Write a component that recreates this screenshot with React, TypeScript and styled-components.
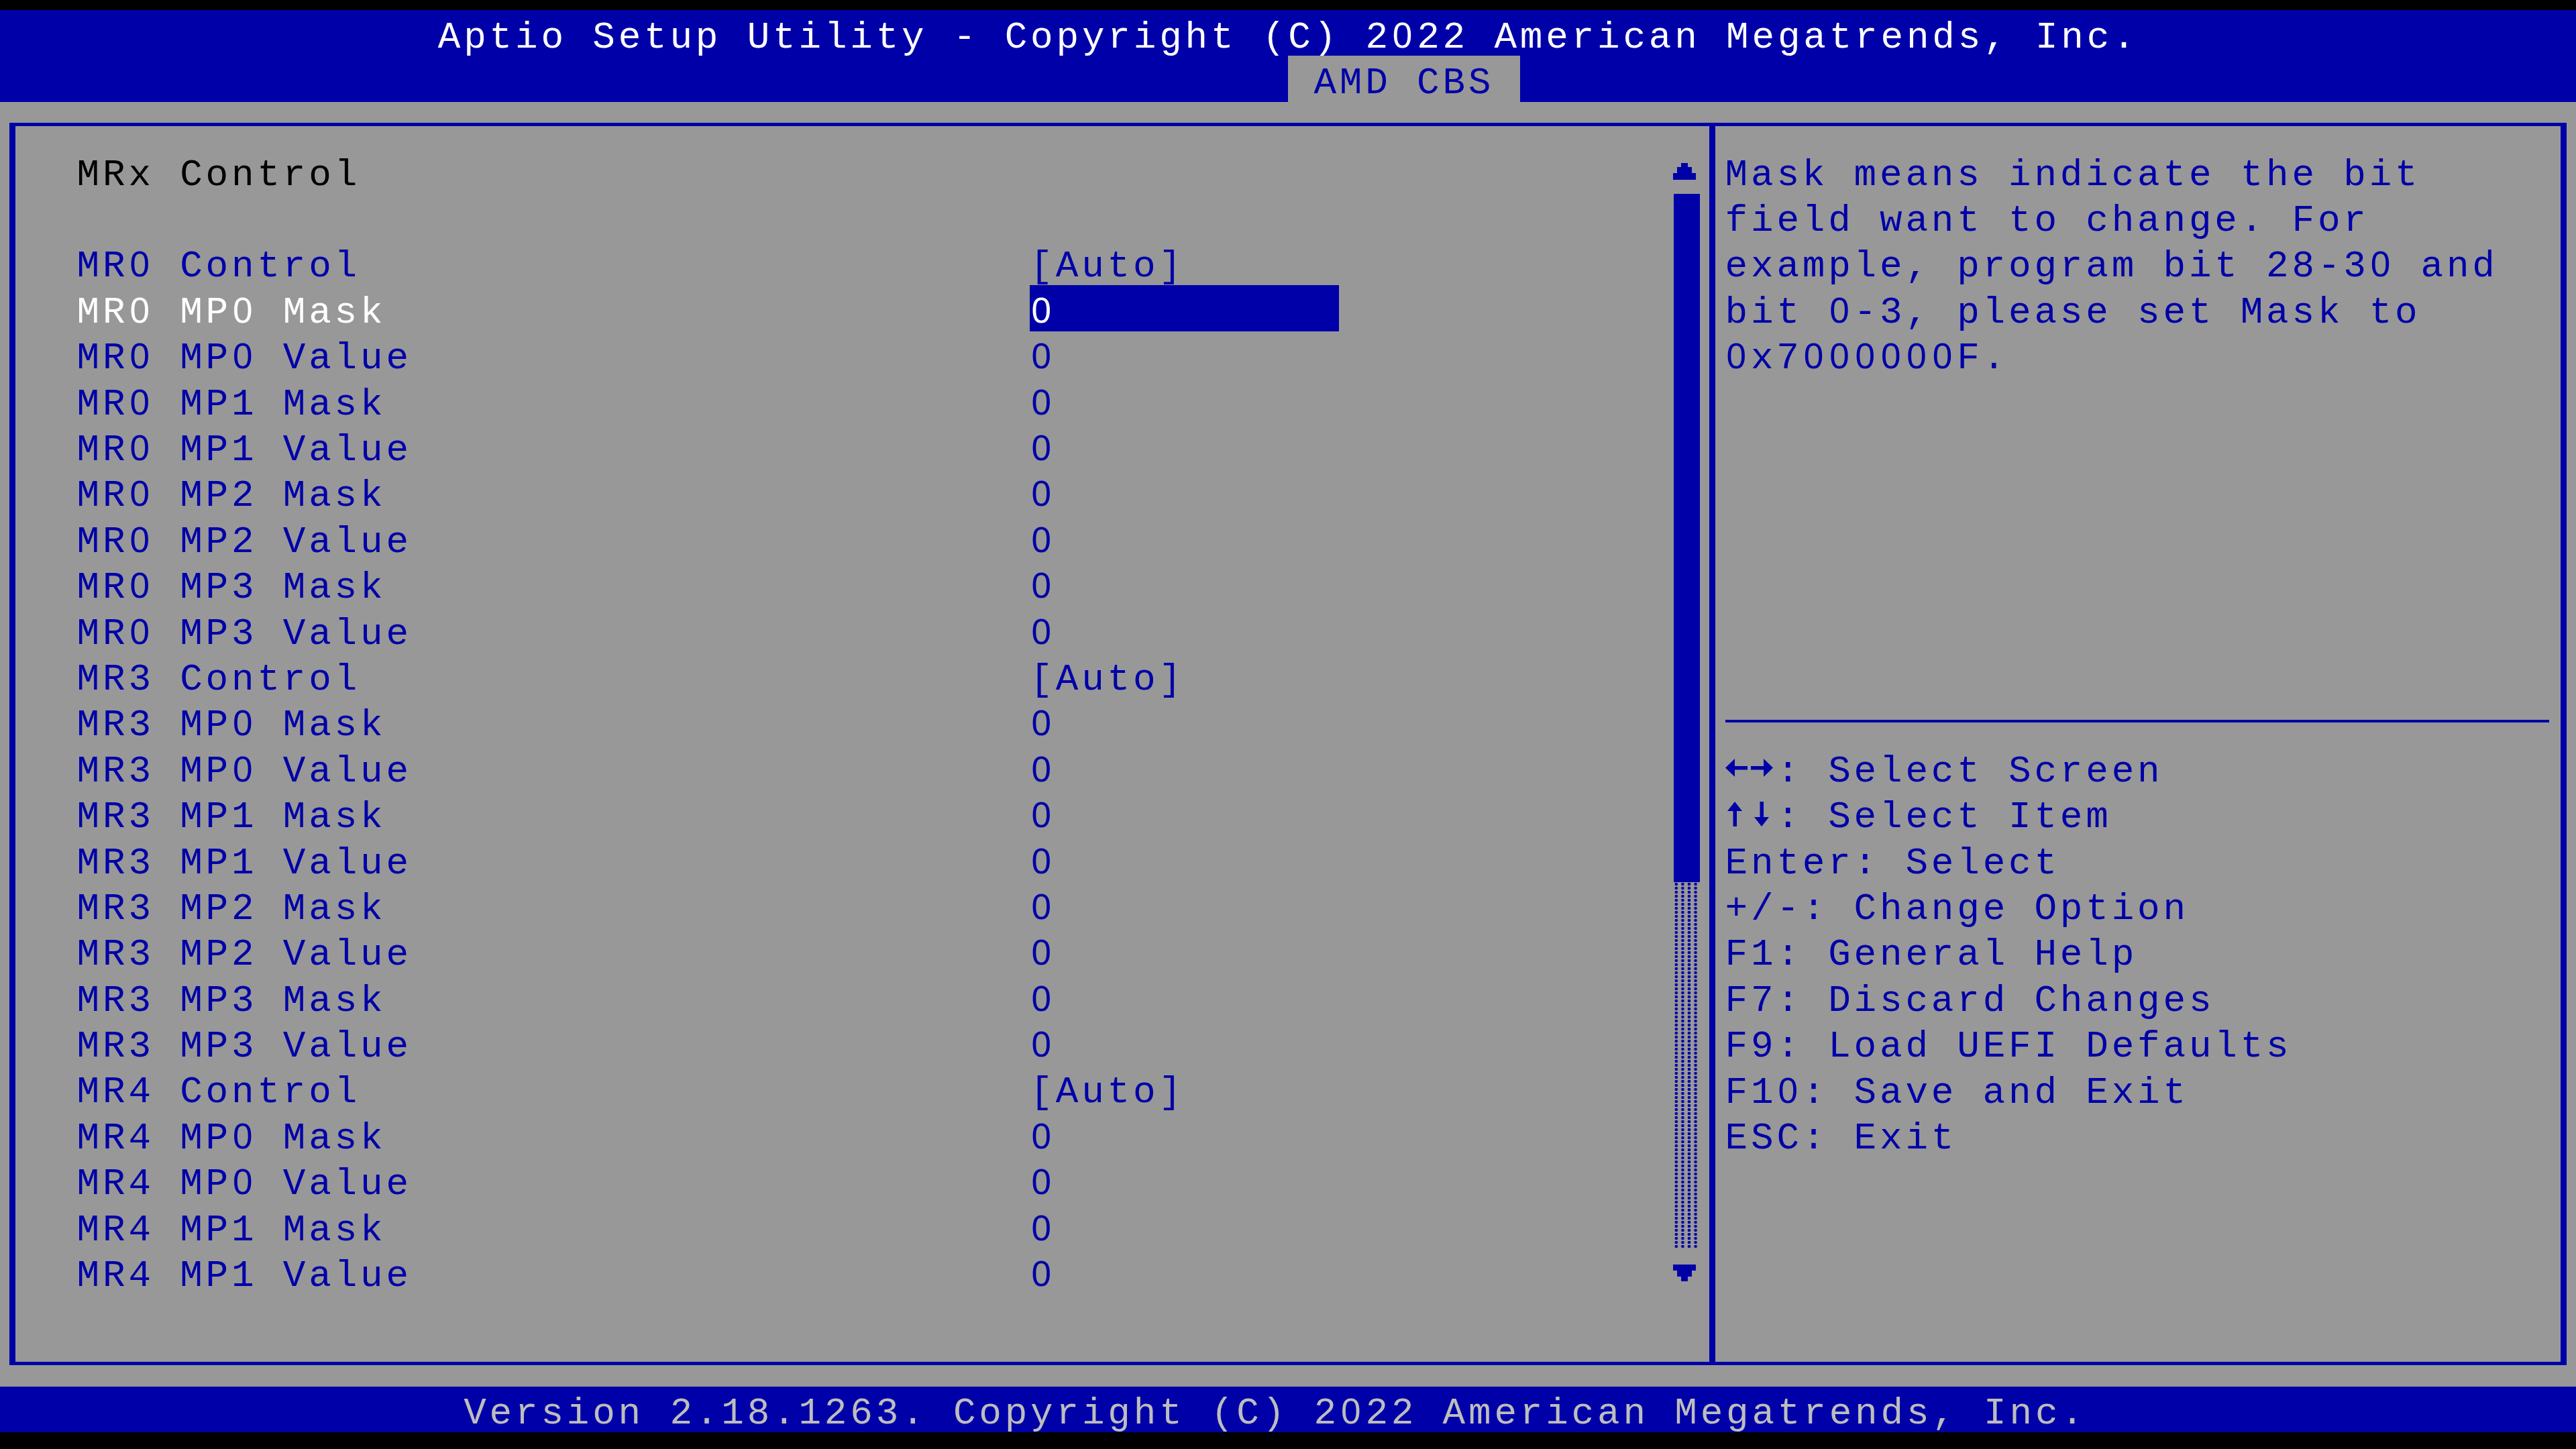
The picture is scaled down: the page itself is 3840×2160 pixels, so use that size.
import React from 'react';
import styled, { createGlobalStyle } from 'styled-components';

// text-mode grid: 100 columns x 31 rows
const CELL = 38.4;
const ROW = 68.4;
const DROP = 6.5;
const BLUE = '#0000a8';
const GRAY = '#989898';

const GlobalStyle = createGlobalStyle`
  html, body {
    margin: 0;
    padding: 0;
    background: #000000;
  }
  body {
    overflow: hidden;
  }
`;

const Screen = styled.div`
  width: 3840px;
  height: 2160px;
  box-sizing: border-box;
  padding-top: 15px;
  background: #000000;
  font-family: 'Liberation Mono', 'DejaVu Sans Mono', monospace;
  font-size: 56px;
  letter-spacing: 4.8px;
  line-height: ${ROW}px;
  white-space: pre;
`;

// the firmware font draws a plain oval zero, no dot
const Zero = styled.span`
  display: inline-block;
  width: ${CELL}px;
  box-sizing: border-box;
  padding-left: 2px;
  letter-spacing: 0;
  line-height: 1;
  font-family: 'Liberation Sans', Arial, sans-serif;
  font-size: 53px;
`;

const Header = styled.header`
  background: ${BLUE};
`;

const TitleBar = styled.div`
  height: ${ROW}px;
  box-sizing: border-box;
  padding: ${DROP}px 0 0 ${17 * CELL}px;
  color: #ffffff;
`;

const TabStrip = styled.nav`
  display: flex;
  height: ${ROW}px;
  padding-left: ${50 * CELL}px;
`;

const Tab = styled.div`
  width: ${9 * CELL}px;
  height: ${ROW}px;
  box-sizing: border-box;
  padding: ${DROP}px 0 0 ${CELL}px;
  background: ${GRAY};
  color: ${BLUE};
`;

const Body = styled.main`
  height: ${28 * ROW}px;
  box-sizing: border-box;
  padding: ${ROW / 2 - 2.5}px 14.4px 0;
  background: ${GRAY};
`;

const Frame = styled.div`
  display: flex;
  height: ${27 * ROW + 5}px;
  box-sizing: border-box;
  border-style: solid;
  border-color: ${BLUE};
  border-width: 5px 9.6px;
`;

const MenuPane = styled.section`
  display: flex;
  width: ${66.5 * CELL - 4.8 - 24}px;
  box-sizing: border-box;
  padding: ${ROW / 2 - 2.5}px 14.4px 0 ${3 * CELL - 24}px;
`;

const ItemList = styled.div`
  flex: 1;
`;

const ItemRow = styled.div`
  display: grid;
  grid-template-columns: ${37 * CELL}px ${12 * CELL}px;
  height: ${ROW}px;
`;

const Label = styled.div<{ $tone?: 'title' | 'selected' }>`
  height: ${ROW}px;
  box-sizing: border-box;
  padding-top: ${DROP}px;
  color: ${({ $tone }) => ($tone === 'title' ? '#000000' : $tone === 'selected' ? '#ffffff' : BLUE)};
`;

const Value = styled.div<{ $selected?: boolean }>`
  height: ${ROW}px;
  box-sizing: border-box;
  padding-top: ${DROP}px;
  background: ${({ $selected }) => ($selected ? BLUE : 'transparent')};
  color: ${({ $selected }) => ($selected ? '#ffffff' : BLUE)};
`;

const ScrollBar = styled.div`
  display: flex;
  flex-direction: column;
  width: ${CELL}px;
`;

const ScrollArrow = styled.div`
  height: ${ROW}px;
  box-sizing: border-box;
  padding-top: 23px;
  margin-left: -1px;

  svg {
    display: block;
  }
`;

const ScrollThumb = styled.div<{ $rows: number }>`
  height: ${({ $rows }) => $rows * ROW}px;
  background: ${BLUE};
`;

const ScrollTrack = styled.div<{ $rows: number }>`
  height: ${({ $rows }) => $rows * ROW}px;
  width: 36px;
  margin-left: -1px;
  background-image: radial-gradient(circle at 50% 50%, ${BLUE} 2px, transparent 2.6px);
  background-size: 9.6px 6px;
`;

const HelpPane = styled.aside`
  flex: 1;
  box-sizing: border-box;
  border-left: 9.6px solid ${BLUE};
  padding: ${ROW / 2 - 2.5}px 0 0 14.4px;
`;

const HelpText = styled.div`
  height: ${12 * ROW}px;
`;

const HelpLine = styled.div`
  height: ${ROW}px;
  box-sizing: border-box;
  padding-top: ${DROP}px;
  color: ${BLUE};
`;

const KeyGlyph = styled.svg`
  display: inline-block;
  vertical-align: top;
  width: ${2 * CELL}px;
  height: ${ROW - DROP}px;
`;

const Rule = styled.div`
  display: flex;
  align-items: center;
  width: ${32 * CELL}px;
  height: ${ROW}px;

  &::before {
    content: '';
    flex: 1;
    height: 4px;
    background: ${BLUE};
  }
`;

const Footer = styled.footer`
  height: ${ROW}px;
  box-sizing: border-box;
  padding: ${DROP}px 0 0 ${18 * CELL}px;
  background: ${BLUE};
  color: #bdbdbd;
`;

function Mono({ text }: { text: string }) {
  const parts = text.split('0');
  return (
    <>
      {parts.map((part, i) => (
        <React.Fragment key={i}>
          {i > 0 && <Zero>0</Zero>}
          {part}
        </React.Fragment>
      ))}
    </>
  );
}

const UpArrow = () => (
  <svg width='34' height='25' viewBox='0 0 34 25'>
    <polygon fill={BLUE} points='12,0 22,0 22,6 28,6 28,15 34,15 34,25 0,25 0,15 6,15 6,6 12,6' />
  </svg>
);

const DownArrow = () => (
  <svg width='34' height='25' viewBox='0 0 34 25'>
    <polygon fill={BLUE} points='0,0 34,0 34,9 28,9 28,18 22,18 22,25 12,25 12,18 6,18 6,9 0,9' />
  </svg>
);

// left / right arrow pair
const SideArrows = () => (
  <KeyGlyph viewBox={`0 0 ${2 * CELL} ${ROW - DROP}`}>
    <polygon fill={BLUE} points='0,28.5 14,15 14,42' />
    <rect fill={BLUE} x='13' y='26' width='20' height='5.5' />
    <rect fill={BLUE} x='38' y='26' width='20' height='5.5' />
    <polygon fill={BLUE} points='71,28.5 57,15 57,42' />
  </KeyGlyph>
);

// up / down arrow pair
const UpDownArrows = () => (
  <KeyGlyph viewBox={`0 0 ${2 * CELL} ${ROW - DROP}`}>
    <polygon fill={BLUE} points='14,11 3,25 25,25' />
    <rect fill={BLUE} x='11.5' y='24' width='5.5' height='24' />
    <rect fill={BLUE} x='51.5' y='11' width='5.5' height='24' />
    <polygon fill={BLUE} points='43,34 65,34 54,48' />
  </KeyGlyph>
);

interface Item {
  label: string;
  value: string;
}

function register_items(reg: string): Item[] {
  const rows: Item[] = [{ label: `${reg} Control`, value: '[Auto]' }];
  ['MP0', 'MP1', 'MP2', 'MP3'].forEach((mp) => {
    rows.push({ label: `${reg} ${mp} Mask`, value: '0' });
    rows.push({ label: `${reg} ${mp} Value`, value: '0' });
  });
  return rows;
}

const ITEMS: Item[] = [...register_items('MR0'), ...register_items('MR3'), ...register_items('MR4').slice(0, 5)];

const SELECTED = 1;

const HELP = [
  'Mask means indicate the bit',
  'field want to change. For',
  'example, program bit 28-30 and',
  'bit 0-3, please set Mask to',
  '0x7000000F.',
];

const KEYS: { glyph?: 'side' | 'updown'; text: string }[] = [
  { glyph: 'side', text: ': Select Screen' },
  { glyph: 'updown', text: ': Select Item' },
  { text: 'Enter: Select' },
  { text: '+/-: Change Option' },
  { text: 'F1: General Help' },
  { text: 'F7: Discard Changes' },
  { text: 'F9: Load UEFI Defaults' },
  { text: 'F10: Save and Exit' },
  { text: 'ESC: Exit' },
];

export default function App() {
  return (
    <Screen>
      <GlobalStyle />
      <Header>
        <TitleBar>
          <Mono text='Aptio Setup Utility - Copyright (C) 2022 American Megatrends, Inc.' />
        </TitleBar>
        <TabStrip>
          <Tab>AMD CBS</Tab>
        </TabStrip>
      </Header>

      <Body>
        <Frame>
          <MenuPane>
            <ItemList>
              <ItemRow>
                <Label $tone='title'>MRx Control</Label>
              </ItemRow>
              <ItemRow />
              {ITEMS.map((item, i) => (
                <ItemRow key={item.label}>
                  <Label $tone={i === SELECTED ? 'selected' : undefined}>
                    <Mono text={item.label} />
                  </Label>
                  <Value $selected={i === SELECTED}>
                    <Mono text={item.value} />
                  </Value>
                </ItemRow>
              ))}
            </ItemList>

            <ScrollBar>
              <ScrollArrow>
                <UpArrow />
              </ScrollArrow>
              <ScrollThumb $rows={15} />
              <ScrollTrack $rows={8} />
              <ScrollArrow>
                <DownArrow />
              </ScrollArrow>
            </ScrollBar>
          </MenuPane>

          <HelpPane>
            <HelpText>
              {HELP.map((line) => (
                <HelpLine key={line}>
                  <Mono text={line} />
                </HelpLine>
              ))}
            </HelpText>
            <Rule />
            {KEYS.map((key) => (
              <HelpLine key={key.text}>
                {key.glyph === 'side' && <SideArrows />}
                {key.glyph === 'updown' && <UpDownArrows />}
                <Mono text={key.text} />
              </HelpLine>
            ))}
          </HelpPane>
        </Frame>
      </Body>

      <Footer>
        <Mono text='Version 2.18.1263. Copyright (C) 2022 American Megatrends, Inc.' />
      </Footer>
    </Screen>
  );
}
